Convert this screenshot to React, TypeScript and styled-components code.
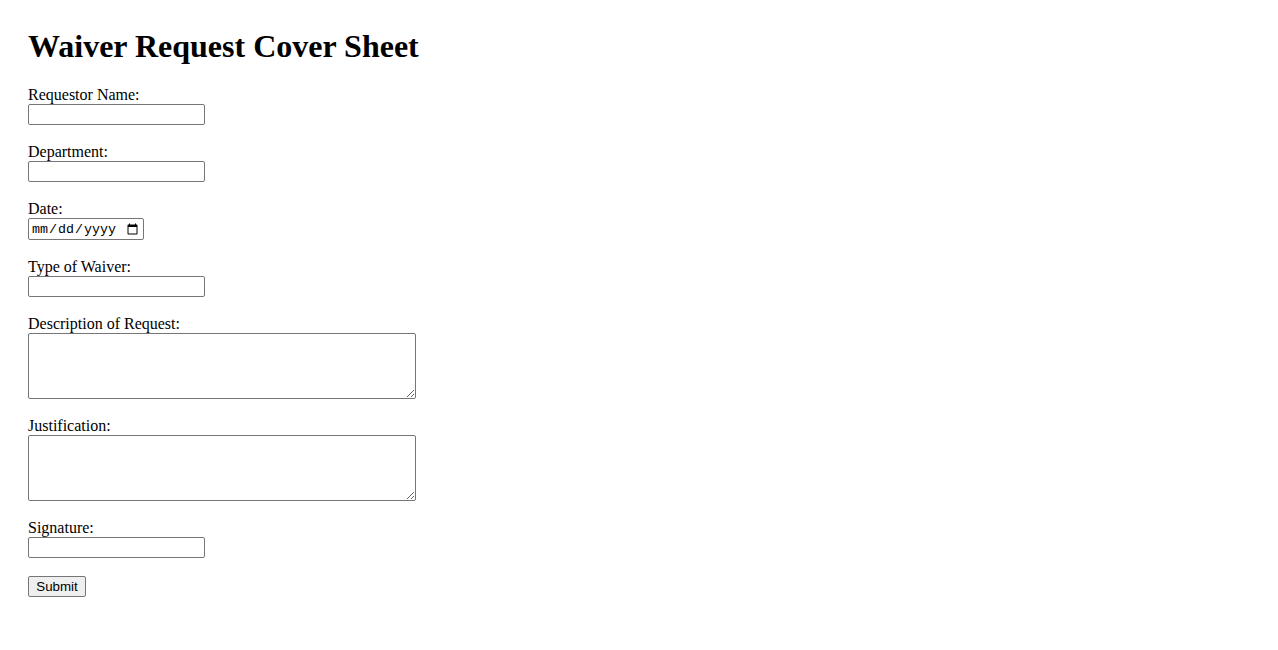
import React from 'react';
import styled, {createGlobalStyle} from 'styled-components';

const GlobalStyle = createGlobalStyle`
    body {
        margin: 8px;
        background: #fff;
        color: #000;
        font-family: "Liberation Serif", "Times New Roman", serif;
        font-size: 16px;
    }
`;

const fields = [
    {id: 'name', label: 'Requestor Name:', kind: 'text'},
    {id: 'department', label: 'Department:', kind: 'text'},
    {id: 'date', label: 'Date:', kind: 'date'},
    {id: 'type', label: 'Type of Waiver:', kind: 'text'},
    {id: 'description', label: 'Description of Request:', kind: 'area'},
    {id: 'justification', label: 'Justification:', kind: 'area'},
    {id: 'signature', label: 'Signature:', kind: 'text'},
];

export default function App() {
    return (
        <>
            <GlobalStyle/>
            <Sheet>
                <Title>Waiver Request Cover Sheet</Title>
                <Form onSubmit={e => e.preventDefault()}>
                    {fields.map(f => (
                        <Field key={f.id}>
                            <Label htmlFor={f.id}>{f.label}</Label>
                            {f.kind === 'area'
                                ? <Area id={f.id}/>
                                : <Input id={f.id} type={f.kind} $date={f.kind === 'date'}/>}
                        </Field>
                    ))}
                    <Submit type="submit">Submit</Submit>
                </Form>
            </Sheet>
        </>
    );
}

const Sheet = styled.main`
    padding: 20px;
`;

const Title = styled.h1`
    font-size: 32px;
    font-weight: bold;
    line-height: 37px;
    margin: 0 0 21px 0;
`;

const Form = styled.form`
    display: flex;
    flex-direction: column;
    align-items: flex-start;
`;

const Field = styled.div`
    display: flex;
    flex-direction: column;
    align-items: flex-start;
    margin-bottom: 18px;
`;

const Label = styled.label`
    line-height: 18px;
`;

const Input = styled.input<{ $date?: boolean }>`
    box-sizing: border-box;
    width: ${p => p.$date ? '116px' : '177px'};
    height: ${p => p.$date ? '22px' : '21px'};
    margin: 0;
    padding: ${p => p.$date ? '2px 2px 0 2px' : '1px 2px'};
    border: 1px solid #767676;
    border-radius: 2px;
    font-family: ${p => p.$date ? '"Liberation Mono", monospace' : '"Liberation Sans", Arial, sans-serif'};
    font-size: 13.33px;
`;

const Area = styled.textarea`
    box-sizing: border-box;
    width: 388px;
    height: 66px;
    margin: 0;
    padding: 2px;
    border: 1px solid #767676;
    border-radius: 2px;
    font-family: "Liberation Mono", monospace;
    font-size: 13.33px;
`;

const Submit = styled.button`
    box-sizing: border-box;
    width: 58px;
    height: 21px;
    margin: 0;
    padding: 1px 6px;
    border: 1px solid #767676;
    border-radius: 2px;
    background: #efefef;
    color: #000;
    font-family: "Liberation Sans", Arial, sans-serif;
    font-size: 13.33px;
`;
